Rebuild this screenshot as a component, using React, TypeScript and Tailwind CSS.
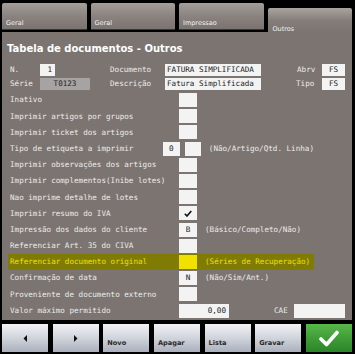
import React from "react";

const mono = { fontFamily: '"DejaVu Sans Mono", "Liberation Mono", monospace' };
const sans = { fontFamily: '"DejaVu Sans", "Liberation Sans", sans-serif' };

type Row = {
  label: string;
  value?: string;
  check?: boolean;
  extraBox?: boolean;
  note?: string;
  highlight?: boolean;
};

const rows: Row[] = [
  { label: "Inativo" },
  { label: "Imprimir artigos por grupos" },
  { label: "Imprimir ticket dos artigos" },
  { label: "Tipo de etiqueta a imprimir", value: "0", extraBox: true, note: "(Não/Artigo/Qtd. Linha)" },
  { label: "Imprimir observações dos artigos" },
  { label: "Imprimir complementos(Inibe lotes)" },
  { label: "Nao imprime detalhe de lotes" },
  { label: "Imprimir resumo do IVA", check: true },
  { label: "Impressão dos dados do cliente", value: "B", note: "(Básico/Completo/Não)" },
  { label: "Referenciar Art. 35 do CIVA" },
  { label: "Referenciar documento original", highlight: true, note: "(Séries de Recuperação)" },
  { label: "Confirmação de data", value: "N", note: "(Não/Sim/Ant.)" },
  { label: "Proveniente de documento externo" },
];

function Tab({ label, active }: { label: string; active?: boolean }) {
  if (active) {
    return (
      <div
        className="flex-1 flex items-start bg-gradient-to-b from-[#aaa4a1] via-[#847d7a] to-[#7b7471] rounded-t-[2px] pl-[5px] pt-[18px] text-[6.5px] leading-none text-[#f2f2f2]"
        style={sans}
      >
        {label}
      </div>
    );
  }
  return (
    <div
      className="h-[27px] flex items-end bg-gradient-to-b from-[#a49e9b] via-[#8a837f] to-[#7a7370] border-b border-[#3a3634] rounded-t-[2px] pl-[4px] pb-[3px] text-[6.5px] leading-none text-[#f2f2f2]"
      style={sans}
    >
      {label}
    </div>
  );
}

function Box({ children, className = "", highlight }: { children?: React.ReactNode; className?: string; highlight?: boolean }) {
  return (
    <div
      className={`h-[14px] flex items-center justify-center text-[7.6px] text-[#222] ${highlight ? "bg-[#f0e100]" : "bg-[#f3f3f3]"} ${className}`}
      style={mono}
    >
      {children}
    </div>
  );
}

function Btn({ label, children }: { label?: string; children?: React.ReactNode }) {
  return (
    <div className="relative h-[28px] bg-gradient-to-b from-[#f1f2f5] via-[#d0d4db] to-[#aab0bd] flex items-center justify-center">
      {children}
      {label && (
        <span className="absolute left-[4px] bottom-[5px] text-[6.6px] leading-none font-bold text-[#2a2a2a]" style={sans}>
          {label}
        </span>
      )}
    </div>
  );
}

export default function App() {
  return (
    <div className="w-[355px] h-[354px] bg-black pt-[3px] pl-[2px] pr-[3px] flex flex-col">
      <div className="grid grid-cols-4 gap-x-[4px] h-[29px] items-start">
        <Tab label="Geral" />
        <Tab label="Geral" />
        <Tab label="Impressao" />
        <div className="h-full pt-[5px] flex flex-col">
          <Tab label="Outros" active />
        </div>
      </div>
      <div className="h-[288px] bg-[#7b7471] pt-[8px] flex flex-col">
        <div className="h-[16px] flex items-center pl-[5px] text-[10px] font-bold text-white" style={sans}>
          Tabela de documentos - Outros
        </div>
        <div className="mt-[7px] flex items-center h-[13px] text-[7.6px] text-[#ececec]" style={mono}>
          <span className="w-[38px] pl-[8px]">N.</span>
          <div className="w-[15px] h-[12px] bg-[#f3f3f3] text-[#222] flex items-center justify-end pr-[3px]">1</div>
          <span className="ml-[55px] w-[55px]">Documento</span>
          <div className="w-[96px] h-[12px] bg-[#f3f3f3] text-[#222] flex items-center pl-[2px]">FATURA SIMPLIFICADA</div>
          <span className="ml-[36px] w-[25px]">Abrv</span>
          <div className="w-[23px] h-[12px] bg-[#f3f3f3] text-[#222] flex items-center justify-center">FS</div>
        </div>
        <div className="mt-[1px] flex items-center h-[13px] text-[7.6px] text-[#ececec]" style={mono}>
          <span className="w-[38px] pl-[8px]">Série</span>
          <div className="w-[50px] h-[12px] bg-[#a6a3a2] text-[#222] flex items-center justify-center">T0123</div>
          <span className="ml-[20px] w-[55px]">Descrição</span>
          <div className="w-[96px] h-[12px] bg-[#f3f3f3] text-[#222] flex items-center pl-[2px]">Fatura Simplificada</div>
          <span className="ml-[35px] w-[26px]">Tipo</span>
          <div className="w-[23px] h-[12px] bg-[#f3f3f3] text-[#222] flex items-center justify-center">FS</div>
        </div>
        <div className="mt-[2px] flex flex-col">
          {rows.map((r, i) => (
            <div
              key={i}
              className={`ml-[6px] w-[306px] h-[16.2px] flex items-center ${r.highlight ? "bg-[#7f7b05]" : ""}`}
            >
              <span
                className={`w-[171px] pl-[2px] text-[7.6px] whitespace-nowrap ${r.highlight ? "text-[#eee100]" : "text-[#ececec]"}`}
                style={mono}
              >
                {r.label}
              </span>
              <Box className="w-[18px]" highlight={r.highlight}>
                {r.check ? (
                  <svg width="8" height="7" viewBox="0 0 8 7">
                    <path d="M0.8 3.8 L3 6 L7.3 1" stroke="#111" strokeWidth="1.6" fill="none" />
                  </svg>
                ) : (
                  r.value
                )}
              </Box>
              {r.extraBox && <Box className="w-[18px] ml-[5px]" />}
              {r.note && (
                <span
                  className={`ml-[8px] text-[7.6px] whitespace-nowrap ${r.highlight ? "text-[#eee100]" : "text-[#ececec]"}`}
                  style={mono}
                >
                  {r.note}
                </span>
              )}
            </div>
          ))}
          <div className="ml-[6px] w-[345px] h-[16.2px] flex items-center">
            <span className="w-[171px] pl-[2px] text-[7.6px] text-[#ececec] whitespace-nowrap" style={mono}>
              Valor máximo permitido
            </span>
            <Box className="w-[50px] !justify-end pr-[3px]">0,00</Box>
            <span className="ml-[45px] w-[20px] text-[7.6px] text-[#ececec]" style={mono}>CAE</span>
            <Box className="w-[51px]" />
          </div>
        </div>
      </div>
      <div className="mt-[4px] grid grid-cols-7 gap-x-[4.5px]">
        <Btn>
          <svg width="5" height="7" viewBox="0 0 5 7"><path d="M4 0 L0.5 3.5 L4 7 Z" fill="#111" /></svg>
        </Btn>
        <Btn>
          <svg width="5" height="7" viewBox="0 0 5 7"><path d="M1 0 L4.5 3.5 L1 7 Z" fill="#111" /></svg>
        </Btn>
        <Btn label="Novo" />
        <Btn label="Apagar" />
        <Btn label="Lista" />
        <Btn label="Gravar" />
        <div className="h-[28px] bg-gradient-to-b from-[#58b84a] via-[#3f9d37] to-[#2c852a] flex items-center justify-center">
          <svg width="20" height="17" viewBox="0 0 20 17">
            <path d="M2 9 L7.5 14.5 L18 2.5" stroke="#fff" strokeWidth="3.6" fill="none" strokeLinecap="round" strokeLinejoin="round" />
          </svg>
        </div>
      </div>
    </div>
  );
}
